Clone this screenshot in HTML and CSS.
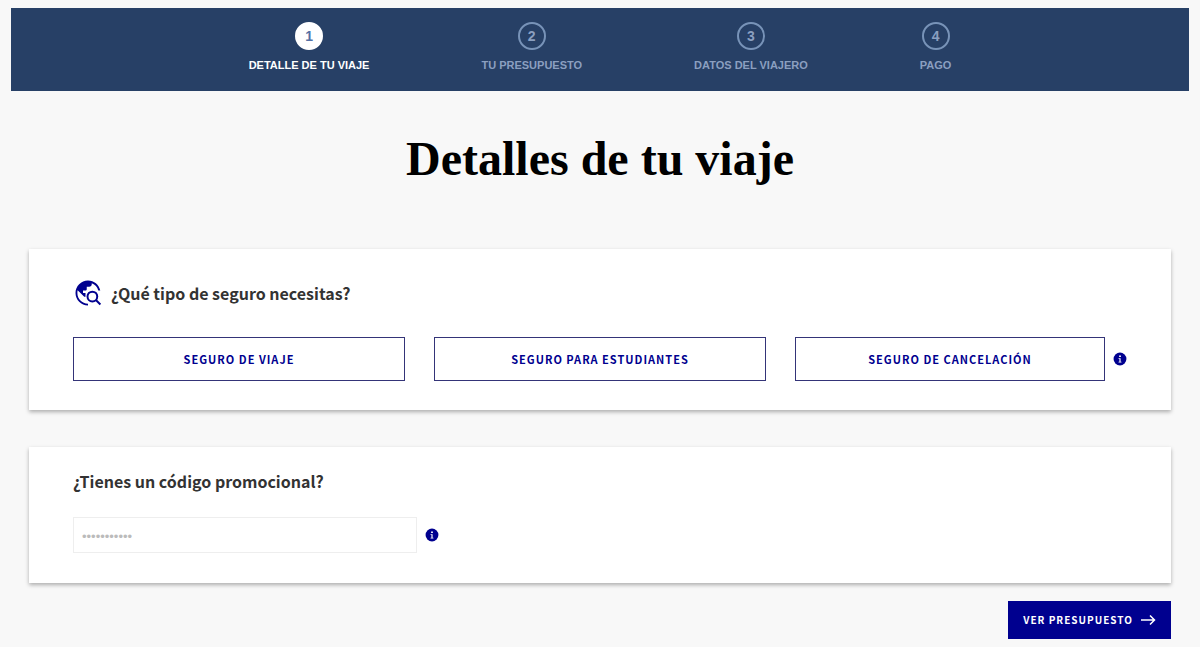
FILE: index.html
```html
<!DOCTYPE html>
<html lang="es">
<head>
  <meta charset="UTF-8">
  <meta name="viewport" content="width=device-width, initial-scale=1">
  <title>Detalles de tu viaje</title>
  <link rel="stylesheet" href="styles.css">
</head>
<body>

  <nav class="pasos" aria-label="Pasos">
    <ol>
      <li class="paso activo" aria-current="step"><span class="numero">1</span><span>DETALLE DE TU VIAJE</span></li>
      <li class="paso"><span class="numero">2</span><span>TU PRESUPUESTO</span></li>
      <li class="paso"><span class="numero">3</span><span>DATOS DEL VIAJERO</span></li>
      <li class="paso"><span class="numero">4</span><span>PAGO</span></li>
    </ol>
  </nav>

  <main>
    <h1>Detalles de tu viaje</h1>

    <section class="tarjeta">
      <h2>
        <svg class="icono-mundo" viewBox="0 0 24 24" aria-hidden="true">
          <path d="M12 20.500v1.500C6.480 22 2 17.520 2 12S6.480 2 12 2c4.840 0 8.870 3.440 9.800 8h-1.600c-.7-2.700-2.500-4.800-5.200-5.800V5c0 1.100-.9 2-2 2h-2v2c0 .55-.45 1-1 1H8v2h2v3H9L3.700 9.800C3.560 10.500 3.500 11.200 3.500 12c0 4.700 3.800 8.500 8.500 8.500z"/>
          <circle class="lupa" cx="15.500" cy="14.800" r="3.900"/>
          <path class="lupa" d="M18.300 17.600l3.600 3.600"/>
        </svg>
        ¿Qué tipo de seguro necesitas?
      </h2>
      <div class="opciones">
        <div class="opcion"><button type="button" class="btn-opcion">SEGURO DE VIAJE</button></div>
        <div class="opcion"><button type="button" class="btn-opcion">SEGURO PARA ESTUDIANTES</button></div>
        <div class="opcion">
          <button type="button" class="btn-opcion">SEGURO DE CANCELACIÓN</button>
          <button type="button" class="info" aria-label="Información sobre el seguro de cancelación">
            <svg viewBox="0 0 24 24"><circle cx="12" cy="12" r="11"/><path d="M10.500 6h3v2.500h-3zM9.500 10.500h3.500v6h1.500v1.500h-5v-1.500H11v-4.500H9.500z"/></svg>
          </button>
        </div>
      </div>
    </section>

    <section class="tarjeta promo">
      <h2><label for="codigo">¿Tienes un código promocional?</label></h2>
      <div class="campo">
        <input type="text" id="codigo" placeholder="•••••••••••">
        <button type="button" class="info" aria-label="Información sobre el código promocional">
          <svg viewBox="0 0 24 24"><circle cx="12" cy="12" r="11"/><path d="M10.500 6h3v2.500h-3zM9.500 10.500h3.500v6h1.500v1.500h-5v-1.500H11v-4.500H9.500z"/></svg>
        </button>
      </div>
    </section>

    <div class="acciones">
      <button type="submit" class="btn-presupuesto">
        VER PRESUPUESTO
        <svg viewBox="0 0 16 12" aria-hidden="true"><path d="M1 6h13.500M10 1.500l4.500 4.500-4.500 4.500"/></svg>
      </button>
    </div>
  </main>

</body>
</html>
```
FILE: styles.css
```css
* {
  box-sizing: border-box;
}
body {
  margin: 0;
  padding: 8px 11px;
  background-color: #f8f8f8;
  color: #333;
  font-family: "Noto Sans CJK SC", "Open Sans", sans-serif;
}
.pasos {
  background-color: #274066;
  padding: 14px 0 18px;
}
.pasos ol {
  display: flex;
  justify-content: center;
  gap: 112px;
  margin: 0;
  padding: 0;
  list-style: none;
}
.paso {
  display: flex;
  flex-direction: column;
  align-items: center;
  gap: 7px;
  color: #8b9fc0;
  font: bold 11px/16px "Liberation Sans", Arial, sans-serif;
}
.numero {
  display: flex;
  align-items: center;
  justify-content: center;
  width: 28px;
  height: 28px;
  border: 2px solid #7893b8;
  border-radius: 50%;
  font-size: 14px;
}
.activo {
  color: white;
}
.activo .numero {
  background-color: white;
  border-color: white;
  color: #5470a5;
}
main {
  padding: 0 18px;
}
h1 {
  margin: 40px 0 62px;
  color: black;
  font: bold 48px/56px "Liberation Serif", "Times New Roman", serif;
  text-align: center;
}
.tarjeta {
  background-color: white;
  padding: 29px 44px;
  margin-bottom: 37px;
  box-shadow: 0 2px 4px rgba(0, 0, 0, 0.3);
}
h2 {
  display: flex;
  align-items: center;
  gap: 8px;
  margin: 0 0 29px;
  font-size: 16px;
  line-height: 29px;
}
.icono-mundo {
  width: 30px;
  height: 30px;
  fill: #00008f;
}
.lupa {
  fill: none;
  stroke: #00008f;
  stroke-width: 1.6;
}
.opciones {
  display: grid;
  grid-template-columns: repeat(3, 1fr);
  gap: 29px;
}
.opcion {
  display: flex;
  align-items: center;
  gap: 8px;
}
.btn-opcion {
  flex: 1;
  height: 44px;
  border: 1px solid #343478;
  background-color: white;
  color: #00008f;
  font: bold 11px/16px "Noto Sans CJK SC", "Open Sans", sans-serif;
  letter-spacing: 1px;
  cursor: pointer;
}
.info {
  width: 14px;
  height: 14px;
  padding: 0;
  border: none;
  background: none;
  cursor: pointer;
}
.info svg {
  display: block;
}
.info circle {
  fill: #00008f;
}
.info path {
  fill: white;
}
.promo {
  padding-top: 20px;
  padding-bottom: 30px;
  margin-bottom: 18px;
}
.promo h2 {
  margin-bottom: 21px;
}
.campo {
  display: flex;
  align-items: center;
  gap: 8px;
}
.campo input {
  width: 344px;
  height: 36px;
  padding: 2px 8px 0;
  border: 1px solid #eee;
  font: 13px "Liberation Sans", Arial, sans-serif;
}
.campo input::placeholder {
  color: #bbb;
}
.acciones {
  display: flex;
  justify-content: flex-end;
}
.btn-presupuesto {
  display: flex;
  align-items: center;
  gap: 7px;
  height: 38px;
  padding: 0 15px;
  border: none;
  background-color: #00008f;
  color: white;
  font: bold 10px/16px "Noto Sans CJK SC", "Open Sans", sans-serif;
  letter-spacing: 1px;
  cursor: pointer;
}
.btn-presupuesto svg {
  width: 16px;
  height: 12px;
  fill: none;
  stroke: white;
  stroke-width: 1.5;
}
```
